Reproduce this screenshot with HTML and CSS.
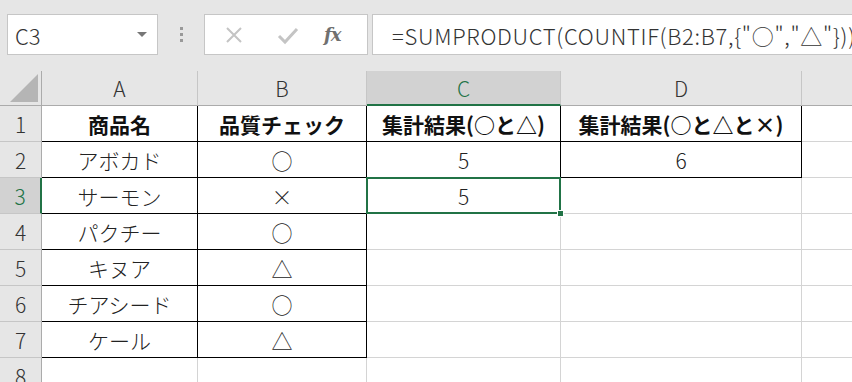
FILE: index.html
```html
<!DOCTYPE html>
<html lang="ja">
<head>
  <meta charset="UTF-8">
  <title>SUMPRODUCT COUNTIF</title>
  <link rel="stylesheet" href="styles.css">
</head>
<body>

  <!-- Formula Bar -->
  <div class="toolbar">
    <div class="namebox">
      <span>C3</span>
      <span class="arrow"></span>
    </div>
    <div class="grip"><i></i><i></i><i></i></div>
    <div class="fxbox">
      <svg class="icon" width="20" height="20" viewBox="0 0 20 20">
        <path d="M3 3 L17 17 M17 3 L3 17" stroke="#c4c4c4" stroke-width="2" fill="none"/>
      </svg>
      <svg class="icon" width="22" height="20" viewBox="0 0 22 20">
        <path d="M2 11 L8 17 L20 4" stroke="#c4c4c4" stroke-width="3" fill="none"/>
      </svg>
      <span class="fx">fx</span>
    </div>
    <div class="formula">=SUMPRODUCT(COUNTIF(B2:B7,{"○","△"}))</div>
  </div>

  <!-- Sheet -->
  <div class="sheet">
    <div class="corner"><span class="tri"></span></div>
    <div class="colhead">A</div>
    <div class="colhead">B</div>
    <div class="colhead active">C</div>
    <div class="colhead">D</div>
    <div class="colhead">E</div>

    <div class="rowhead">1</div>
    <div class="cell b bold">商品名</div>
    <div class="cell b bold">品質チェック</div>
    <div class="cell b bold">集計結果(○と△)</div>
    <div class="cell b bold">集計結果(○と△と×)</div>
    <div class="cell"></div>

    <div class="rowhead">2</div>
    <div class="cell b">アボカド</div>
    <div class="cell b">○</div>
    <div class="cell b">5</div>
    <div class="cell b">6</div>
    <div class="cell"></div>

    <div class="rowhead active">3</div>
    <div class="cell b">サーモン</div>
    <div class="cell b">×</div>
    <div class="cell selected">5<span class="handle"></span></div>
    <div class="cell"></div>
    <div class="cell"></div>

    <div class="rowhead">4</div>
    <div class="cell b">パクチー</div>
    <div class="cell b">○</div>
    <div class="cell"></div>
    <div class="cell"></div>
    <div class="cell"></div>

    <div class="rowhead">5</div>
    <div class="cell b">キヌア</div>
    <div class="cell b">△</div>
    <div class="cell"></div>
    <div class="cell"></div>
    <div class="cell"></div>

    <div class="rowhead">6</div>
    <div class="cell b">チアシード</div>
    <div class="cell b">○</div>
    <div class="cell"></div>
    <div class="cell"></div>
    <div class="cell"></div>

    <div class="rowhead">7</div>
    <div class="cell b">ケール</div>
    <div class="cell b">△</div>
    <div class="cell"></div>
    <div class="cell"></div>
    <div class="cell"></div>

    <div class="rowhead">8</div>
    <div class="cell"></div>
    <div class="cell"></div>
    <div class="cell"></div>
    <div class="cell"></div>
    <div class="cell"></div>
  </div>

</body>
</html>
```

FILE: styles.css
```css
* {
  box-sizing: border-box;
}

html, body {
  margin: 0;
  overflow: hidden;
}

body {
  width: 852px;
  height: 382px;
  font-family: "Noto Sans CJK JP", "Noto Sans", sans-serif;
  font-weight: 300;
  color: #222;
  background-color: #fff;
}

/* Formula Bar */
.toolbar {
  height: 71px;
  background-color: #e6e6e6;
  display: flex;
  align-items: flex-start;
  padding-top: 14px;
  padding-left: 7px;
}

.namebox, .fxbox, .formula {
  height: 41px;
  background: #fff;
  border: 1px solid #c6c6c6;
  display: flex;
  align-items: center;
}

.namebox {
  width: 151px;
  padding: 0 10px 0 7px;
  justify-content: space-between;
  font-size: 22px;
  color: #333;
}

.arrow {
  width: 0;
  height: 0;
  border-left: 5px solid transparent;
  border-right: 5px solid transparent;
  border-top: 5px solid #777;
}

.grip {
  width: 46px;
  display: flex;
  flex-direction: column;
  align-items: center;
  gap: 3px;
  padding-top: 13px;
}

.grip i {
  width: 3px;
  height: 3px;
  background: #999;
}

.fxbox {
  width: 164px;
  padding-left: 19px;
  gap: 33px;
}

.fx {
  font-family: "DejaVu Serif", "Liberation Serif", serif;
  font-style: italic;
  font-weight: bold;
  font-size: 18px;
  color: #707070;
  margin-left: -8px;
  letter-spacing: -1px;
}

.formula {
  flex: 1;
  margin-left: 4px;
  padding-left: 19px;
  font-size: 22px;
  letter-spacing: 0.7px;
  color: #333;
  white-space: nowrap;
  overflow: hidden;
  border-right: none;
}

/* Grid */
.sheet {
  display: grid;
  grid-template-columns: 42px 156px 169px 194px 241px 110px;
  grid-template-rows: 35px repeat(8, 36px);
}

.corner, .colhead, .rowhead {
  background-color: #e6e6e6;
  color: #333;
  font-size: 21px;
  display: flex;
  align-items: center;
  justify-content: center;
}

.corner {
  border-right: 1px solid #ababab;
  border-bottom: 1px solid #ababab;
  position: relative;
}

.tri {
  position: absolute;
  right: 3px;
  bottom: 3px;
  width: 0;
  height: 0;
  border-left: 28px solid transparent;
  border-bottom: 28px solid #b5b5b5;
}

.colhead {
  border-right: 1px solid #c6c6c6;
  border-bottom: 1px solid #ababab;
}

.rowhead {
  border-right: 1px solid #ababab;
  border-bottom: 1px solid #c6c6c6;
}

.colhead.active, .rowhead.active {
  background-color: #d2d2d2;
  color: #217346;
}

.colhead.active {
  border-bottom: 2px solid #217346;
}

.rowhead.active {
  border-right: 2px solid #217346;
}

.cell {
  border-right: 1px solid #d4d4d4;
  border-bottom: 1px solid #d4d4d4;
  font-size: 21px;
  display: flex;
  align-items: center;
  justify-content: center;
  white-space: nowrap;
  color: #222;
}

.cell.b {
  border-right-color: #000;
  border-bottom-color: #000;
}

.bold {
  font-weight: bold;
  color: #111;
}

.selected {
  position: relative;
}

.selected::before {
  content: "";
  position: absolute;
  left: -1px;
  top: -1px;
  right: -1px;
  bottom: -1px;
  border: 2px solid #217346;
}

.handle {
  position: absolute;
  right: -4px;
  bottom: -4px;
  width: 7px;
  height: 7px;
  background: #217346;
  border: 1px solid #fff;
}
```
